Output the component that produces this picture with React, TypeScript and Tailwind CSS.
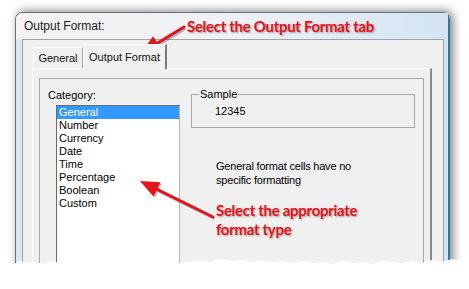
import React from 'react';

const categories = ['General', 'Number', 'Currency', 'Date', 'Time', 'Percentage', 'Boolean', 'Custom'];

function Arrow({ x1, y1, x2, y2 }: { x1: number; y1: number; x2: number; y2: number }) {
  // line from (x1,y1) to tip (x2,y2) with a filled head
  const dx = x2 - x1;
  const dy = y2 - y1;
  const len = Math.sqrt(dx * dx + dy * dy);
  const ux = dx / len;
  const uy = dy / len;
  const headLen = 19;
  const headW = 8;
  const bx = x2 - ux * headLen;
  const by = y2 - uy * headLen;
  const p1 = `${bx - uy * headW},${by + ux * headW}`;
  const p2 = `${bx + uy * headW},${by - ux * headW}`;
  return (
    <g>
      <line x1={x1 + 1.5} y1={y1 + 1.5} x2={bx + 1.5} y2={by + 1.5} stroke="rgba(0,0,0,0.25)" strokeWidth="3" />
      <polygon points={`${x2 + 1.5},${y2 + 1.5} ${bx - uy * headW + 1.5},${by + ux * headW + 1.5} ${bx + uy * headW + 1.5},${by - ux * headW + 1.5}`} fill="rgba(0,0,0,0.25)" />
      <line x1={x1} y1={y1} x2={bx} y2={by} stroke="#e3141c" strokeWidth="3" strokeLinecap="round" />
      <polygon points={`${x2},${y2} ${p1} ${p2}`} fill="#e3141c" />
    </g>
  );
}

export default function App() {
  return (
    <div className="relative w-[469px] h-[289px] bg-white overflow-hidden font-['Liberation_Sans',Arial,sans-serif] text-[11px] text-black">
      <div className="pl-[15px] pt-[12px]">
        {/* window */}
        <div className="w-[435px] h-[272px] flex flex-col rounded-t-[7px] border-l border-t border-r-2 border-[#6d7278] border-r-[#2c7c9b] bg-gradient-to-r from-[#dae6f2] to-[#d2e3f4] pl-[6px] pr-[4px] shadow-[3px_-1px_10px_rgba(0,0,0,0.5)]">
          <div className="-ml-[6px] -mr-[4px] rounded-tl-[6px] h-[26px] flex items-center pl-[8px] text-[12px] text-[#1b1b1b] bg-gradient-to-r from-[#f3f3f3] via-[#eef1f5] to-[#d4e4f4]">
            Output Format:
          </div>

          <div className="flex-1 border border-[#a3a3a3] bg-[#f0f0f0]">
            {/* tabs */}
            <div className="flex items-end pl-[10px] pt-[4px] h-[28px]">
              <div className="w-[50px] h-[21px] border-l border-t border-white border-r border-r-[#a0a0a0] flex items-center justify-center pt-[1px] text-[#111]">
                General
              </div>
              <div className="relative z-10 -mb-px w-[84px] h-[25px] bg-[#f0f0f0] border-l border-t border-white border-r-2 border-r-[#7a7a7a] flex items-center justify-center text-[#111]">
                Output Format
              </div>
            </div>

            {/* tab panel */}
            <div className="ml-[9px] w-[400px] h-[200px] border-l border-t border-white border-r-2 border-r-[#8a8a8a] pl-[6px] pt-[9px]">
              <div className="w-[385px] h-[190px] border border-[#a8a8a8] flex">
                <div className="w-[140px] pl-[8px] pt-[10px]">
                  <div className="h-[13px] leading-[13px]">Category:</div>
                  <div className="mt-[3px] ml-[8px] w-[124px] h-[170px] bg-white border-l border-t border-[#6a6a6a] border-r border-b border-r-[#b5b5b5] border-b-[#b5b5b5]">
                    {categories.map((c, i) => (
                      <div
                        key={c}
                        className={
                          i === 0
                            ? 'h-[13px] leading-[13px] pl-[2px] bg-[#3399ff] text-white'
                            : 'h-[13px] leading-[13px] pl-[2px]'
                        }
                      >
                        {c}
                      </div>
                    ))}
                  </div>
                </div>

                <div className="pl-[11px] pt-[15px]">
                  <div className="relative w-[224px] h-[34px] border border-[#a8a8a8] pl-[23px] pt-[10px]">
                    <span className="absolute left-[7px] -top-[7px] px-[1px] bg-[#f0f0f0] leading-[13px]">Sample</span>
                    <div className="leading-[13px]">12345</div>
                  </div>
                  <div className="ml-[25px] mt-[31px] leading-[14px] tracking-[-0.2px]">
                    <div>General format cells have no</div>
                    <div>specific formatting</div>
                  </div>
                </div>
              </div>
            </div>
          </div>
        </div>
      </div>

      {/* annotations */}
      <svg className="absolute left-0 top-0" width="469" height="289">
        <Arrow x1={184} y1={27} x2={141} y2={53} />
        <Arrow x1={213} y1={217} x2={140} y2={181} />
      </svg>
      <div className="absolute left-[187px] top-[17px] font-['Lato',sans-serif] font-bold text-[15px] leading-[19px] tracking-[-0.3px] text-[#e3141c] [text-shadow:1px_1px_2px_rgba(0,0,0,0.35)]">
        Select the Output Format tab
      </div>
      <div className="absolute left-[216px] top-[201px] font-['Lato',sans-serif] font-bold text-[15px] leading-[19px] tracking-[-0.3px] text-[#e3141c] [text-shadow:1px_1px_2px_rgba(0,0,0,0.35)]">
        <div>Select the appropriate</div>
        <div>format type</div>
      </div>

      {/* torn bottom edge */}
      <svg className="absolute left-0 bottom-0" width="469" height="34" viewBox="0 0 469 34">
        <path
          d="M0,8 L8,7 L14,9 L20,6 L28,8 L36,7 L44,9 L52,6 L60,8 L70,7 L78,9 L88,6 L98,8 L108,7 L118,9 L128,6 L138,8 L148,7 L158,9 L168,6 L178,8 L190,7 L200,5 L210,7 L220,4 L232,6 L242,5 L252,7 L262,5 L272,7 L282,6 L292,8 L302,6 L312,8 L322,7 L332,9 L342,6 L352,8 L362,7 L372,9 L382,6 L392,7 L402,8 L412,6 L422,8 L432,5 L442,7 L452,4 L460,6 L469,5 L469,34 L0,34 Z"
          fill="#ffffff"
        />
      </svg>
    </div>
  );
}
